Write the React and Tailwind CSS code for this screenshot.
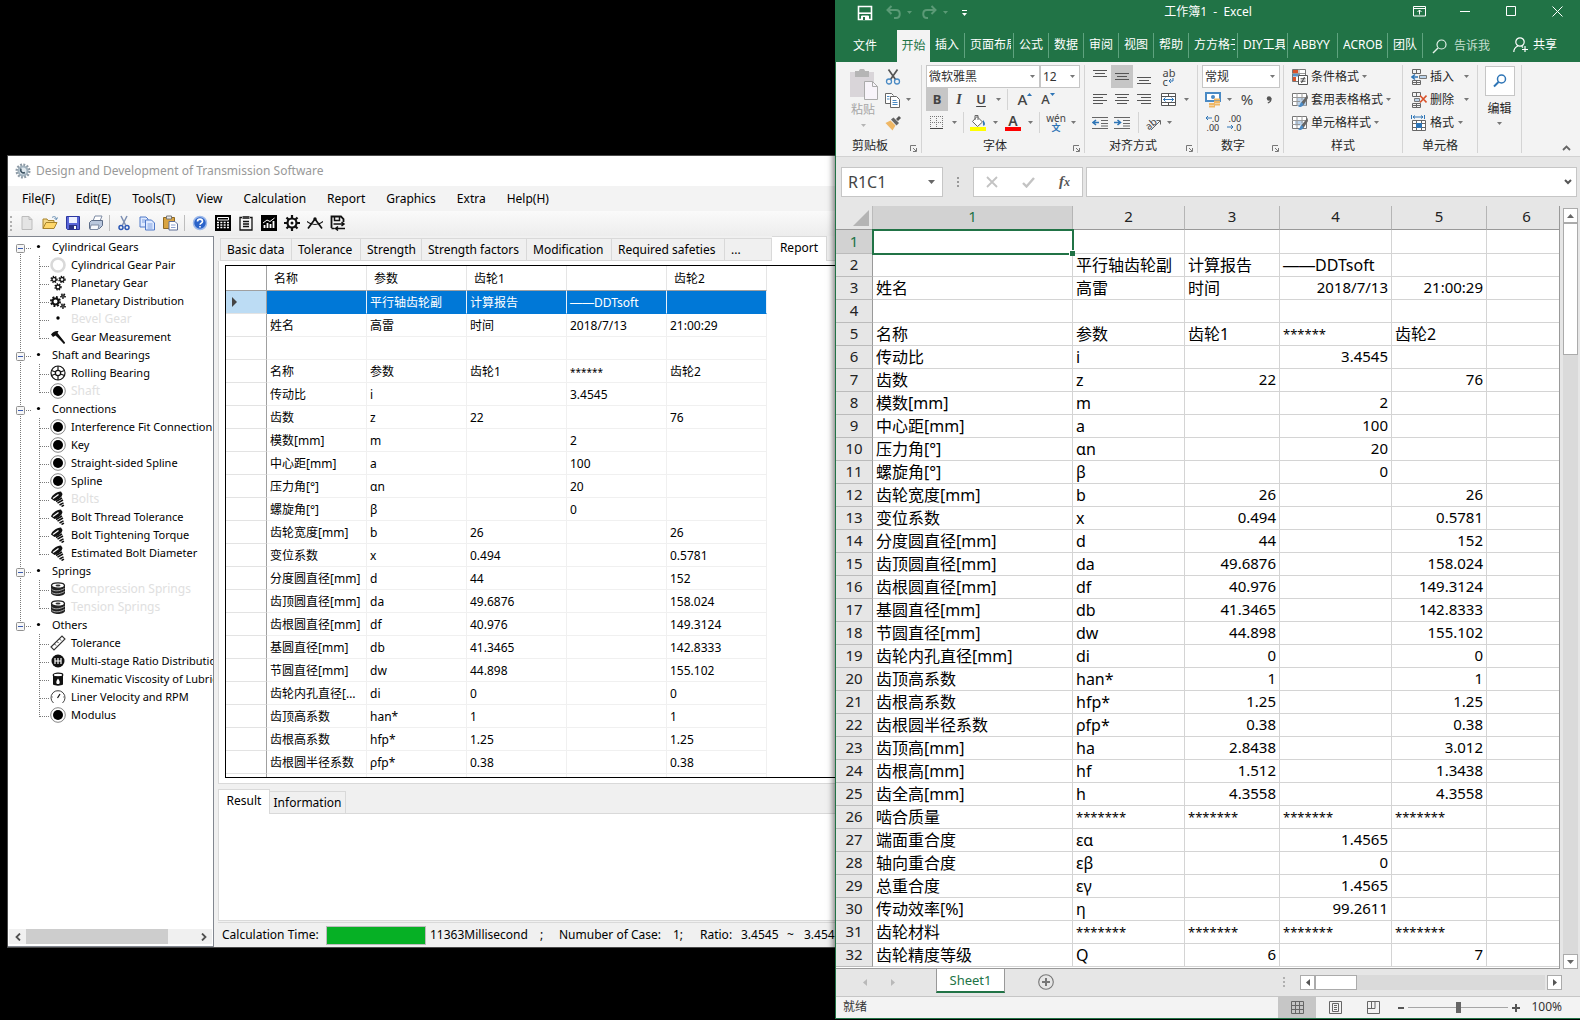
import React from "react";

/* ---------- small shared drawings ---------- */

const Svg = ({ w = 16, h = 16, children, className = "" }) => (
  <svg width={w} height={h} viewBox={`0 0 ${w} ${h}`} fill="none" aria-hidden="true" className={"shrink-0 " + className}>
    {children}
  </svg>
);

const Caret = ({ color = "#777" }) => (
  <Svg w={5} h={3}>
    <path d="M0 0h5L2.500 3z" fill={color} />
  </Svg>
);

/* ---------- left window: toolbar icons ---------- */

const NewIcon = () => (
  <Svg>
    <path d="M3 1.500h7l3 3v10H3z" fill="#e4e4e4" stroke="#bcbcbc" />
    <path d="M10 1.500v3h3" stroke="#bcbcbc" />
  </Svg>
);
const OpenIcon = () => (
  <Svg>
    <path d="M1 13.500V4h4l1 1.500h6V8" fill="#f5d98a" stroke="#a8842c" />
    <path d="M1 13.500L4 7.500h11l-3 6z" fill="#ffd76a" stroke="#a8842c" />
    <path d="M10 2.500c2-1.500 4-1 4.500 1.500M15.500 2.500l-1 2-2-1" stroke="#5f88b0" />
  </Svg>
);
const SaveBlueIcon = () => (
  <Svg>
    <path d="M1.500 1.500h13v13h-12l-1-1z" fill="#5a66d8" stroke="#2c37a0" />
    <path d="M4 2h8v6H4z" fill="#eef1ff" />
    <path d="M4 10h8v4.500H4z" fill="#2b3184" />
    <path d="M9 11h2v3H9z" fill="#fff" />
  </Svg>
);
const PrintIcon = () => (
  <Svg>
    <path d="M5 6l2-5h7l-2 5z" fill="#fff" stroke="#7c8aa3" />
    <path d="M1.500 7.500l2-2h11v5l-3 3h-10z" fill="#b9c7dd" stroke="#5d6d88" />
    <path d="M3 10h8l-1 4.500H2z" fill="#f6f8fc" stroke="#7c8aa3" />
  </Svg>
);
const CutIcon = () => (
  <Svg>
    <path d="M5 1l4.500 9M11 1L6.500 10" stroke="#7d8fb3" strokeWidth="1.500" />
    <circle cx="5" cy="12.500" r="2" stroke="#2b57b5" strokeWidth="1.500" />
    <circle cx="11" cy="12.500" r="2" stroke="#2b57b5" strokeWidth="1.500" />
  </Svg>
);
const CopyIcon = () => (
  <Svg>
    <path d="M1 2h6l2 2v8H1z" fill="#dfeaff" stroke="#4f78c8" />
    <path d="M6.500 5h6l3 3v7h-9z" fill="#dfeaff" stroke="#4f78c8" />
    <path d="M3 5h3M3 7h3M8.500 9h5M8.500 11h5M8.500 13h5" stroke="#7ea0e0" />
  </Svg>
);
const PasteIcon = () => (
  <Svg>
    <path d="M1.500 2.500h11v11h-11z" fill="#d9a441" stroke="#8f6a25" />
    <path d="M4.500 1h5v3h-5z" fill="#e8e8e8" stroke="#777" />
    <path d="M7 6.500h6l2.500 2.500v6H7z" fill="#fff" stroke="#5f6f96" />
    <path d="M9 10h4.500M9 12.500h4.500" stroke="#8ba0d0" />
  </Svg>
);
const HelpIcon = () => (
  <Svg>
    <circle cx="8" cy="8" r="6.500" fill="#2a63c9" stroke="#9db9ea" strokeWidth="1.500" />
    <path d="M5.500 6.500c0-3.200 5-3.200 5 0 0 1.600-2.400 1.700-2.400 3.300M8 11v1.500" stroke="#fff" strokeWidth="1.600" />
  </Svg>
);
const CalcIcon = () => (
  <Svg>
    <path d="M0 0h16v16H0z" fill="#000" />
    <path d="M2.500 2.500h11v2.500h-11z" fill="#000" stroke="#fff" />
    <path d="M2 7.500h12M2 10h12M2 12.500h12" stroke="#fff" strokeWidth="1.500" strokeDasharray="2 1.330" />
  </Svg>
);
const NotesIcon = () => (
  <Svg>
    <path d="M4 2.500H2v12.500h12V2.500h-2" stroke="#111" strokeWidth="1.300" />
    <path d="M4.500 1h7v3h-7z" fill="#444" />
    <path d="M5 6.500h6M5 9h6M5 11.500h6" stroke="#111" strokeWidth="1.300" />
  </Svg>
);
const ChartIcon = () => (
  <Svg>
    <path d="M0 0h16v16H0z" fill="#000" />
    <path d="M3.500 13v-3M6.500 13V8M9.500 13V9M12.500 13V6" stroke="#fff" strokeWidth="1.800" />
    <path d="M2 8l4-3 3 1.500L13.500 3" stroke="#fff" />
  </Svg>
);
const GearIcon = () => (
  <Svg>
    <path d="M8 0v16M0 8h16M2.500 2.500l11 11M13.500 2.500l-11 11" stroke="#111" strokeWidth="2.200" />
    <circle cx="8" cy="8" r="4.500" fill="#fff" stroke="#111" strokeWidth="2.200" />
    <circle cx="8" cy="8" r="1.500" fill="#111" />
  </Svg>
);
const CompassIcon = () => (
  <Svg>
    <path d="M8 4L1 13.500M8 4l7 9.500" stroke="#111" strokeWidth="1.700" />
    <path d="M0 6.500c4 4 12 4 16 0" stroke="#111" strokeWidth="1.200" />
    <circle cx="8" cy="4" r="1.700" fill="#111" />
  </Svg>
);
const SaveBlackIcon = () => (
  <Svg>
    <path d="M1.500 13V1.500h9.500l2.500 2.500v3" stroke="#111" strokeWidth="1.800" />
    <path d="M4.500 2v3.500h5V2" stroke="#111" strokeWidth="1.500" />
    <path d="M1.500 13.500h3M3.500 9h10.500M11.500 7l2.500 2-2.500 2M15 13.500H5.500M8 11.500l-2.500 2 2.500 2" stroke="#111" strokeWidth="1.500" />
  </Svg>
);

/* ---------- left window: tree icons ---------- */

const MiniGear = ({ x, y, r }) => (
  <g stroke="#111">
    <circle cx={x} cy={y} r={r + 1} strokeDasharray="1.300 1.200" strokeWidth="1.400" />
    <circle cx={x} cy={y} r={r} strokeWidth="1.300" />
  </g>
);
const treeIcons = {
  ring: <circle cx="8" cy="8" r="6.500" stroke="#d9d9d9" strokeWidth="2.600" />,
  gears: (
    <>
      <MiniGear x={4} y={4.500} r={2} />
      <MiniGear x={12} y={4.500} r={2} />
      <MiniGear x={8} y={12} r={2} />
    </>
  ),
  gears2: (
    <>
      <circle cx="5.500" cy="8.500" r="4.600" stroke="#111" strokeWidth="1.800" strokeDasharray="1.900 1.700" />
      <circle cx="5.500" cy="8.500" r="3" stroke="#111" strokeWidth="2" />
      <MiniGear x={13} y={3} r={1.200} />
      <MiniGear x={13} y={13} r={1.200} />
    </>
  ),
  dot: <circle cx="8" cy="7" r="1.700" fill="#000" />,
  caliper: (
    <>
      <path d="M1 5.500C3 3 5 1.500 8.500 2L7.500 4l7.500 9.500-1 1L5.500 6.500 3 8z" fill="#111" />
      <path d="M7 6l7.500 8.500" stroke="#111" strokeWidth="1.600" />
    </>
  ),
  bearing: (
    <g stroke="#111" strokeWidth="1.200">
      <circle cx="8" cy="8" r="7" />
      <circle cx="8" cy="8" r="2.600" />
      <path d="M8 1v4M8 11v4M1.500 5.500l4 1.500M10.500 9l4 1.500M1.500 10.500l4-1.500M10.500 7l4-1.500" />
    </g>
  ),
  disc: (
    <>
      <circle cx="8" cy="8" r="7.300" stroke="#777" strokeWidth="0.900" />
      <circle cx="8" cy="8" r="5" fill="#000" />
    </>
  ),
  bolt: (
    <>
      <path d="M1 7.500C2 4 6 1 11 0.500L12.500 3C12 6 9 8.500 4.500 10z" fill="#111" />
      <path d="M3 7.500L8.500 3.500" stroke="#fff" strokeWidth="1.200" />
      <path d="M6 10.500l6-3.500M7.500 12.200l5.500-3.200M9.500 14l4-2.200M11.500 15.500l2.500-1.300" stroke="#111" strokeWidth="1.500" />
    </>
  ),
  spring: (
    <>
      <path d="M1 5v7c1 4 13 4 14 0V4z" fill="#222" />
      <ellipse cx="8" cy="4.500" rx="6.500" ry="2.700" fill="#fff" stroke="#222" strokeWidth="1.300" />
      <ellipse cx="8" cy="4.500" rx="2.500" ry="1" fill="#333" />
      <path d="M1.500 8c2 2.500 8 2.500 13-.5M1.500 11c2 2.500 8 2.500 13-.5" stroke="#ccc" strokeWidth="0.800" />
    </>
  ),
  ruler: (
    <>
      <path d="M1 12L12 1l3 3L4 15z" stroke="#333" strokeWidth="1.100" />
      <path d="M4.500 9l1.500 1.500M7 6.500l1.500 1.500M9.500 4l1.500 1.500" stroke="#333" />
    </>
  ),
  ratio: (
    <>
      <circle cx="8" cy="8" r="6.500" fill="#111" />
      <path d="M5 5v6M8 5v6M11 5v6M5 8h6" stroke="#fff" strokeWidth="1.200" />
    </>
  ),
  oil: (
    <>
      <path d="M3 4h10v9.500c-2 1.500-8 1.500-10 0z" fill="#111" />
      <ellipse cx="8" cy="4" rx="4.800" ry="1.800" fill="#fff" stroke="#111" strokeWidth="1.200" />
      <path d="M8 7.500c2.500 3.500 2 5.500 0 5.500s-2.500-2 0-5.500z" fill="#fff" />
    </>
  ),
  gauge: (
    <>
      <path d="M3.500 14a7 7 0 1 1 9 0" stroke="#444" />
      <path d="M7.500 9l2.500-4" stroke="#111" strokeWidth="1.200" />
      <path d="M8 1v1.500M1.500 8H3M13 8h1.500" stroke="#888" />
    </>
  ),
};

const Minus = () => (
  <>
    <rect x="8.500" y="6.500" width="8" height="8" rx="1" fill="#f6f6f6" stroke="#919191" />
    <path d="M10 10.500h5" stroke="#3a5bb0" />
  </>
);
const dots = { stroke: "#7a7a7a", strokeDasharray: "1 1" };

const TREE = [
  ["Cylindrical Gears", [
    ["ring", "Cylindrical Gear Pair"], ["gears", "Planetary Gear"], ["gears2", "Planetary Distribution"],
    ["dot", "Bevel Gear", true], ["caliper", "Gear Measurement"]]],
  ["Shaft and Bearings", [["bearing", "Rolling Bearing"], ["disc", "Shaft", true]]],
  ["Connections", [
    ["disc", "Interference Fit Connection"], ["disc", "Key"], ["disc", "Straight-sided Spline"], ["disc", "Spline"],
    ["bolt", "Bolts", true], ["bolt", "Bolt Thread Tolerance"], ["bolt", "Bolt Tightening Torque"], ["bolt", "Estimated Bolt Diameter"]]],
  ["Springs", [["spring", "Compression Springs", true], ["spring", "Tension Springs", true]]],
  ["Others", [
    ["ruler", "Tolerance"], ["ratio", "Multi-stage Ratio Distribution"], ["oil", "Kinematic Viscosity of Lubricant"],
    ["gauge", "Liner Velocity and RPM"], ["disc", "Modulus"]]],
];

function Tree() {
  return (
    <ul className="flex-1 pt-px text-[11px] leading-[18px]">
      {TREE.map(([name, items], g) => {
        const last = g === TREE.length - 1;
        return (
          <li key={name}>
            <div className="flex h-[18px] whitespace-nowrap">
              <Svg w={44} h={18}>
                <path d={`M12.500 ${g === 0 ? 10 : 0}V${last ? 10 : 18}M18 10.500h6`} {...dots} />
                <Minus />
                <circle cx="30.500" cy="8.500" r="1.600" fill="#000" />
              </Svg>
              <span>{name}</span>
            </div>
            <ul>
              {items.map(([icon, label, off], i) => (
                <li key={label} className="flex h-[18px] whitespace-nowrap">
                  <Svg w={42} h={18}>
                    {!last && <path d="M12.500 0V18" {...dots} />}
                    <path d={`M31.500 0V${i === items.length - 1 ? 11 : 18}M32 10.500h10`} {...dots} />
                  </Svg>
                  <Svg className="mr-[5px] mt-px">{treeIcons[icon]}</Svg>
                  <span className={off ? "text-[12px] text-[#e0e0e0]" : ""}>{label}</span>
                </li>
              ))}
            </ul>
          </li>
        );
      })}
    </ul>
  );
}

/* ---------- data ---------- */

const REPORT = [
  ["", "平行轴齿轮副", "计算报告", "——DDTsoft", ""],
  ["姓名", "高雷", "时间", "2018/7/13", "21:00:29"],
  ["", "", "", "", ""],
  ["名称", "参数", "齿轮1", "******", "齿轮2"],
  ["传动比", "i", "", "3.4545", ""],
  ["齿数", "z", "22", "", "76"],
  ["模数[mm]", "m", "", "2", ""],
  ["中心距[mm]", "a", "", "100", ""],
  ["压力角[°]", "αn", "", "20", ""],
  ["螺旋角[°]", "β", "", "0", ""],
  ["齿轮宽度[mm]", "b", "26", "", "26"],
  ["变位系数", "x", "0.494", "", "0.5781"],
  ["分度圆直径[mm]", "d", "44", "", "152"],
  ["齿顶圆直径[mm]", "da", "49.6876", "", "158.024"],
  ["齿根圆直径[mm]", "df", "40.976", "", "149.3124"],
  ["基圆直径[mm]", "db", "41.3465", "", "142.8333"],
  ["节圆直径[mm]", "dw", "44.898", "", "155.102"],
  ["齿轮内孔直径[mm]", "di", "0", "", "0"],
  ["齿顶高系数", "han*", "1", "", "1"],
  ["齿根高系数", "hfp*", "1.25", "", "1.25"],
  ["齿根圆半径系数", "ρfp*", "0.38", "", "0.38"],
];
const MORE = [
  ["齿顶高[mm]", "ha", "2.8438", "", "3.012"],
  ["齿根高[mm]", "hf", "1.512", "", "1.3438"],
  ["齿全高[mm]", "h", "4.3558", "", "4.3558"],
  ["啮合质量", "*******", "*******", "*******", "*******"],
  ["端面重合度", "εα", "", "1.4565", ""],
  ["轴向重合度", "εβ", "", "0", ""],
  ["总重合度", "εγ", "", "1.4565", ""],
  ["传动效率[%]", "η", "", "99.2611", ""],
  ["齿轮材料", "*******", "*******", "*******", "*******"],
  ["齿轮精度等级", "Q", "6", "", "7"],
];
const SHEET = [["", "", "", "", ""], ...REPORT, ...MORE];

const isNumber = (c) => /^\d/.test(c);
const isStars = (c) => /^\*+$/.test(c);

/* Liberation Sans draws long dashes edge to edge, so they join into one rule. */
const CellText = ({ value }) =>
  value.startsWith("——") ? (
    <>
      <span className="font-['Liberation_Sans',sans-serif]">——</span>
      {value.slice(2)}
    </>
  ) : (
    value
  );

/* ---------- left window ---------- */

const Tool = ({ label, children }) => (
  <button aria-label={label} className="flex h-[23px] w-[23px] items-center justify-center">{children}</button>
);
const ToolSep = ({ m }) => <span className={`h-[16px] w-px bg-[#bdbdbd] ${m}`} />;

const TABS = [
  ["Basic data", "w-[72px]"], ["Tolerance", "w-[69px]"], ["Strength", "w-[61px]"], ["Strength factors", "w-[105px]"],
  ["Modification", "w-[85px]"], ["Required safeties", "w-[113px]"], ["...", "w-[47px]"],
];

function GearWindow() {
  return (
    <section className="ml-[7px] mt-[155px] flex min-w-0 flex-1 flex-col self-start overflow-hidden border-y border-l border-[#4a4a4a] bg-[#f0f0f0] text-[12px] text-black">
      <header className="flex h-[30px] items-center bg-white pl-[7px] text-[#999]">
        <Svg className="mr-[5px]">
          <circle cx="8" cy="8" r="6" stroke="#8d9aa5" strokeWidth="3" strokeDasharray="1.800 1.300" />
          <circle cx="8" cy="8" r="4.500" fill="#dfe8ee" stroke="#9fb0bc" strokeWidth="2" />
          <path d="M6 5.500C5 8 7 11 10 9.500" stroke="#3f5666" strokeWidth="1.600" />
        </Svg>
        <h1>Design and Development of Transmission Software</h1>
      </header>
      <nav className="flex h-[25px] items-center gap-px bg-[#f3f3f3] pl-[4px]">
        {["File(F)", "Edit(E)", "Tools(T)", "View", "Calculation", "Report", "Graphics", "Extra", "Help(H)"].map((m) => (
          <button key={m} className="px-[10px]">{m}</button>
        ))}
      </nav>
      <div className="flex h-[25px] items-center bg-gradient-to-b from-[#fafafa] to-[#ededed] pb-px">
        <span className="ml-[2px] mr-[3px] h-[15px] border-l-2 border-dotted border-[#b0b0b0]" />
        <Tool label="New"><NewIcon /></Tool>
        <Tool label="Open"><OpenIcon /></Tool>
        <Tool label="Save"><SaveBlueIcon /></Tool>
        <Tool label="Print"><PrintIcon /></Tool>
        <ToolSep m="mx-[2px]" />
        <Tool label="Cut"><CutIcon /></Tool>
        <Tool label="Copy"><CopyIcon /></Tool>
        <Tool label="Paste"><PasteIcon /></Tool>
        <ToolSep m="mx-[3px]" />
        <Tool label="Help"><HelpIcon /></Tool>
        <Tool label="Calculator"><CalcIcon /></Tool>
        <Tool label="Notes"><NotesIcon /></Tool>
        <Tool label="Chart"><ChartIcon /></Tool>
        <Tool label="Settings"><GearIcon /></Tool>
        <Tool label="Compass"><CompassIcon /></Tool>
        <Tool label="Save as"><SaveBlackIcon /></Tool>
      </div>

      <div className="flex">
        <aside className="flex w-[206px] shrink-0 flex-col overflow-hidden border border-l-0 border-[#828790] bg-white">
          <Tree />
          <div className="mx-px mb-[2px] flex h-[15px] items-center bg-[#f0f0f0]">
            <button aria-label="Scroll left" className="flex w-[17px] justify-center">
              <Svg w={6} h={8}><path d="M5 0.500L1.500 4 5 7.500" stroke="#505050" strokeWidth="1.800" /></Svg>
            </button>
            <div className="flex flex-1 self-stretch"><span className="w-[142px] bg-[#cdcdcd]" /></div>
            <button aria-label="Scroll right" className="flex w-[17px] justify-center">
              <Svg w={6} h={8}><path d="M1 0.500L4.500 4 1 7.500" stroke="#505050" strokeWidth="1.800" /></Svg>
            </button>
          </div>
        </aside>

        <div className="flex min-w-0 flex-1 flex-col pl-[4px]">
          <div role="tablist" className="flex h-[25px] items-end pl-[2px]">
            {TABS.map(([t, w], i) => (
              <button key={t} role="tab" className={`${w} h-[23px] whitespace-nowrap border-b border-r border-t border-[#d9d9d9] pl-[6px] text-left leading-[20px] ${i === 0 ? "border-l" : ""}`}>{t}</button>
            ))}
            <button role="tab" aria-selected="true" className="h-[25px] w-[55px] border-r border-t border-[#d9d9d9] bg-white pb-[2px] text-center leading-[20px]">Report</button>
            <span className="flex-1 self-stretch border-b border-[#d9d9d9]" />
          </div>
          <div className="border-b border-l border-[#d9d9d9] bg-white pb-[5px] pl-[6px] pt-[4px]">
            <div className="border border-r-0 border-black">
              <table className="w-[541px] table-fixed border-separate border-spacing-0 text-left leading-[20px]">
                <colgroup>
                  <col className="w-[41px]" />
                  <col className="w-[100px]" /><col className="w-[100px]" /><col className="w-[100px]" /><col className="w-[100px]" /><col className="w-[100px]" />
                </colgroup>
                <thead>
                  <tr className="h-[25px]">
                    {["", "名称", "参数", "齿轮1", "", "齿轮2"].map((c, i) => (
                      <th key={i} className={`border-b border-r border-b-[#a0a0a0] p-0 pl-[7px] pt-[2px] font-normal ${i === 0 ? "border-r-[#a0a0a0]" : "border-r-[#e5e5e5]"}`}>{c}</th>
                    ))}
                  </tr>
                </thead>
                <tbody>
                  {REPORT.map((r, i) => (
                    <tr key={i} className="h-[23px]">
                      <th className={`border-b border-r border-b-[#e3e3e3] border-r-[#a0a0a0] p-0 pl-[6px] ${i === 0 ? "bg-[#bcdcf4]" : ""}`}>
                        {i === 0 && <Svg w={6} h={10}><path d="M0 0l5 5-5 5z" fill="#444" /></Svg>}
                      </th>
                      {r.map((c, j) => (
                        <td key={j} className={`truncate border-b border-r p-0 pl-[3px] pt-px ${isStars(c) ? "text-[10px]" : ""} ${i === 0 ? "border-b-[#0078d7] border-r-[#e8f0f8] bg-[#0078d7] text-white" : "border-[#f0f0f0]"}`}><CellText value={c} /></td>
                      ))}
                    </tr>
                  ))}
                  <tr className="h-[3px]">
                    {[0, 1, 2, 3, 4, 5].map((i) => (
                      <td key={i} className={`border-r p-0 ${i === 0 ? "border-r-[#a0a0a0]" : "border-[#f0f0f0]"}`} />
                    ))}
                  </tr>
                </tbody>
              </table>
            </div>
          </div>
          <div role="tablist" className="mt-[5px] flex h-[25px] items-end">
            <button role="tab" aria-selected="true" className="h-[25px] w-[52px] border-l border-r border-t border-[#d9d9d9] bg-white pb-[2px] leading-[20px]">Result</button>
            <button role="tab" className="h-[23px] w-[76px] border-b border-r border-t border-[#d9d9d9] leading-[20px]">Information</button>
            <span className="flex-1 self-stretch border-b border-[#d9d9d9]" />
          </div>
          <div className="h-[107px] border-b border-l border-[#d9d9d9] bg-white" />
          <footer className="mt-px flex h-[25px] items-center whitespace-nowrap border-t border-[#d9d9d9] pl-[4px]">
            <span className="w-[104px] shrink-0">Calculation Time:</span>
            <span role="progressbar" aria-label="Calculation progress" className="h-[19px] w-[100px] shrink-0 border border-[#bcbcbc] bg-[#06b025]" />
            <span className="w-[114px] shrink-0 pl-[4px]">11363Millisecond</span>
            <span className="w-[19px] shrink-0">;</span>
            <span className="w-[114px] shrink-0">Numuber of Case:</span>
            <span className="w-[27px] shrink-0">1;</span>
            <span className="w-[41px] shrink-0">Ratio:</span>
            <span className="w-[46px] shrink-0">3.4545</span>
            <span className="w-[17px] shrink-0">~</span>
            <span>3.4545</span>
          </footer>
        </div>
      </div>
    </section>
  );
}

/* ---------- spreadsheet: ribbon parts ---------- */

const RBtn = ({ label, w = "w-[22px]", on, children }) => (
  <button aria-label={label} className={`flex h-[23px] shrink-0 items-center justify-center ${w} ${on ? "bg-[#c6c6c6]" : ""}`}>{children}</button>
);
const RSep = ({ m = "mx-[3px]" }) => <span className={`h-[21px] w-px shrink-0 bg-[#d4d4d4] ${m}`} />;
const Launcher = () => (
  <button aria-label="More options" className="absolute bottom-px right-[4px]">
    <Svg w={7} h={7} className="block"><path d="M0.500 6V0.500H6M3 3l3 3M6.500 3v3.500H3" stroke="#777" /></Svg>
  </button>
);
const Group = ({ w, name, launcher, children, label = "text-center" }) => (
  <div className={`relative flex shrink-0 flex-col border-r border-[#d4d4d4] ${w}`}>
    {children}
    {name && <span className={`h-[19px] leading-[24px] ${label}`}>{name}</span>}
    {launcher && <Launcher />}
  </div>
);
const Row = ({ children, className = "" }) => <div className={`flex h-[23px] items-center ${className}`}>{children}</div>;

const Pick = ({ label, value, w }) => (
  <label className={`flex h-[23px] shrink-0 items-center border border-[#c6c6c6] bg-white pr-[4px] ${w}`}>
    <select aria-label={label} defaultValue={value} className="min-w-0 flex-1 appearance-none bg-transparent pl-[2px] text-[12px] leading-[20px] text-[#333] outline-none">
      <option>{value}</option>
    </select>
    <Caret />
  </label>
);

const Lines = ({ rows }) => (
  <Svg w={14} h={14}>
    {rows.map(([x, y, w], i) => <path key={i} d={`M${x} ${y + 0.5}h${w}`} stroke="#555" />)}
  </Svg>
);
const Indent = ({ flip }) => (
  <Svg>
    <path d="M0 2.500h16M9 5.500h7M9 8.500h7M0 13.500h16M9 11h7" stroke="#666" />
    <path d={flip ? "M0 7.500h6M3.500 5l3 2.500-3 2.500" : "M7 7.500H1M4 5L1 7.500 4 10"} stroke="#2e75b6" strokeWidth="1.600" />
  </Svg>
);

const StyleTable = ({ children }) => (
  <Svg>
    <path d="M0.500 1.500h14v12H0.500z" fill="#fff" stroke="#777" />
    {children}
    <path d="M0 5.500h14M5 1v12M10 1v7M0 9.500h8" stroke="#999" />
    <path d="M15.500 3l-6 7-2 5 4-2 4.500-7z" fill="#666" />
    <path d="M9.500 10c-1.500 1-1 3-3.500 4.500 2 1 5 .5 5.500-2.500z" fill="#4a8ac4" />
  </Svg>
);
const CondIcon = () => (
  <Svg>
    <path d="M0.500 0.500h13v12H0.500z" fill="#fff" stroke="#777" />
    <path d="M1 1h5v3H1z" fill="#d9532c" /><path d="M1 4.500h7v3H1z" fill="#5b93c8" /><path d="M1 8h3v4H1z" fill="#d9532c" />
    <path d="M7 0v12M0 4.500h13" stroke="#999" />
    <path d="M6.500 6.500h9v9h-9z" fill="#fff" stroke="#555" />
    <path d="M8.500 9.800h5M8.500 12.200h5M12.500 8L9.500 14" stroke="#444" />
  </Svg>
);
const CellBase = () => (
  <path d="M1.500 0.500h8v4h-8zM5.500 0.500v4M1.500 11.500h8v4h-8zM5.500 11.500v4M1.500 13.500h8" stroke="#666" />
);
const InsertIcon = () => (
  <Svg>
    <CellBase />
    <path d="M8.500 6.500h7v3h-7z" fill="#bcd3ea" stroke="#777" />
    <path d="M7 8H1M4 5.500L1 8l3 2.500" stroke="#2e75b6" strokeWidth="1.500" />
  </Svg>
);
const DeleteIcon = () => (
  <Svg>
    <CellBase />
    <path d="M3.500 6.500h5v3h-5z" fill="#bcd3ea" stroke="#777" />
    <path d="M9 3.500l6.500 7M15.500 3.500L9 10.500" stroke="#d9532c" strokeWidth="1.600" />
  </Svg>
);
const FormatIcon = () => (
  <Svg>
    <path d="M1.500 5.500h13v10h-13zM5.500 5.500v10M10.500 5.500v10M1.500 8.500h13M1.500 12.500h13" stroke="#666" fill="#fff" />
    <path d="M5 8h6v5H5z" fill="#2e75b6" />
    <path d="M0.500 0v4M13.500 0v4M2 2h10M4 0.500L2 2l2 1.500M10 0.500L12 2l-2 1.500" stroke="#2e75b6" />
  </Svg>
);

const TextRow = ({ icon, text, caret = "pl-0" }) => (
  <button className="flex h-[23px] items-center gap-[3px] pl-[8px]">
    {icon}
    <span>{text}</span>
    <span className={caret}><Caret /></span>
  </button>
);

const RIBBON_TABS = [
  ["插入", "w-[35px]"], ["页面布局", "w-[49px]"], ["公式", "w-[35px]"], ["数据", "w-[35px]"], ["审阅", "w-[35px]"],
  ["视图", "w-[35px]"], ["帮助", "w-[35px]"], ["方方格子", "w-[49px]"], ["DIY工具箱", "w-[50px]"],
  ["ABBYY", "w-[50px]"], ["ACROB", "w-[50px]"], ["团队", "w-[35px]"],
];

function TitleBar() {
  return (
    <header className="relative flex h-[30px] items-start justify-between pb-[6px] text-white">
      <div className="flex h-[24px] items-center pl-[21px] pt-px">
        <button aria-label="保存" className="mr-[13px]">
          <Svg><path d="M1.500 1.500h13v13h-13z" stroke="#fff" strokeWidth="1.600" /><path d="M2 8.200h12" stroke="#fff" strokeWidth="1.600" /><path d="M4.500 15v-4h7v4" fill="#fff" stroke="#fff" /><path d="M6 12h2v3H6z" fill="#217346" /></Svg>
        </button>
        <button aria-label="撤消" className="mr-[5px]">
          <Svg><path d="M5.500 1L1.500 5l4 4M2 5h8c5 0 5 8 0 8H8" stroke="#5b9a76" strokeWidth="2" /></Svg>
        </button>
        <Caret color="#5b9a76" />
        <button aria-label="恢复" className="ml-[9px] mr-[6px]">
          <Svg><path d="M10.500 1l4 4-4 4M14 5H6c-5 0-5 8 0 8h1" stroke="#5b9a76" strokeWidth="2" /></Svg>
        </button>
        <Caret color="#5b9a76" />
        <button aria-label="自定义" className="ml-[14px]">
          <Svg w={5} h={6}><path d="M0 0.500h5" stroke="#fff" /><path d="M0 3h5L2.500 6z" fill="#fff" /></Svg>
        </button>
      </div>
      <h1 className="absolute inset-x-0 top-0 whitespace-pre text-center text-[12px] leading-[24px]">{"工作簿1  -  Excel"}</h1>
      <div className="flex h-[22px] items-center">
        <button aria-label="功能区显示选项" className="flex w-[46px] justify-center">
          <Svg w={13} h={11}><path d="M0.500 0.500h12v9.500H0.500zM0.500 2.500h12M6.500 8.500V4M4.500 6l2-2 2 2" stroke="#fff" /></Svg>
        </button>
        <button aria-label="最小化" className="flex w-[46px] justify-center"><Svg w={10} h={10}><path d="M0 5.500h10" stroke="#fff" /></Svg></button>
        <button aria-label="最大化" className="flex w-[46px] justify-center"><Svg w={10} h={10}><path d="M0.500 0.500h9v9h-9z" stroke="#fff" /></Svg></button>
        <button aria-label="关闭" className="flex w-[46px] justify-center"><Svg w={11} h={11}><path d="M0.500 0.500l10 10M10.500 0.500l-10 10" stroke="#fff" /></Svg></button>
      </div>
    </header>
  );
}

function RibbonTabs() {
  return (
    <nav className="flex h-[32px] items-stretch text-[12px] text-white">
      <button className="w-[58px] text-center leading-[28px]">文件</button>
      <button className="ml-[3px] w-[33px] bg-[#f3f3f3] text-center leading-[28px] text-[#217346]">开始</button>
      {RIBBON_TABS.map(([t, w]) => (
        <button key={t} className={`flex items-center pb-[4px] pt-[2px] ${w}`}>
          <span className="ml-[5px] mr-[2px] block min-w-0 flex-1 overflow-hidden whitespace-nowrap text-left leading-[24px]">{t}</span>
          <span className="h-[25px] w-px shrink-0 bg-[#5fa37f]" />
        </button>
      ))}
      <button className="flex items-center gap-[7px] pl-[9px] text-[#c5dfd0]">
        <Svg w={15} h={15}><circle cx="9.500" cy="5.500" r="4.500" stroke="#e5f1ea" strokeWidth="1.200" /><path d="M6 9L1 14" stroke="#e5f1ea" strokeWidth="1.400" /></Svg>
        <span>告诉我</span>
      </button>
      <button className="ml-auto mr-[23px] flex items-center gap-[4px] pb-[2px]">
        <Svg w={16} h={16}><circle cx="7" cy="5" r="4.200" stroke="#fff" strokeWidth="1.200" /><path d="M0.800 15c0-3 2-5 4-6M8.500 9.500c1 .3 1 .5 1.500 1M12 9v6M9 12.500h6" stroke="#fff" strokeWidth="1.200" /></Svg>
        <span>共享</span>
      </button>
    </nav>
  );
}

function Ribbon() {
  return (
    <div className="flex h-[95px] items-stretch border-b border-[#d2d2d2] bg-[#f3f3f3] py-[3px] text-[12px] text-[#262626]">
      <Group w="w-[86px]" name="剪贴板" launcher label="pl-[16px]">
        <div className="flex">
          <button className="ml-[8px] flex w-[38px] flex-col items-center pt-[4px] text-[#a6a6a6]">
            <Svg w={29} h={31}>
              <path d="M1 3h24v25H1z" fill="#d9d5d9" />
              <path d="M6 2h4c0-3 6-3 6 0h4v6H6z" fill="#b5b5b5" />
              <path d="M15.500 12.500h8l5 5v13h-13z" fill="#f8f4fa" stroke="#aaa" />
              <path d="M23.500 12.500v5h5" stroke="#aaa" />
            </Svg>
            <span className="leading-[20px]">粘贴</span>
            <span className="flex h-[10px] items-center"><Caret color="#b5b5b5" /></span>
          </button>
          <div className="flex flex-col pl-px">
            <RBtn label="剪切" w="w-[20px]">
              <Svg><path d="M3.500 0.500l7 10M12.500 0.500l-7 10" stroke="#555" strokeWidth="1.700" /><circle cx="4" cy="12.500" r="2.500" stroke="#4a8ac4" strokeWidth="1.300" /><circle cx="12" cy="12.500" r="2.500" stroke="#4a8ac4" strokeWidth="1.300" /></Svg>
            </RBtn>
            <RBtn label="复制" w="w-[30px]">
              <Svg className="mr-[5px]"><path d="M5 11.500H0.500v-10h6l2 2" stroke="#666" fill="#fff" /><path d="M5.500 4.500h6l3 3v8h-9z" fill="#fff" stroke="#666" /><path d="M2 4.500h2.500M2 7h2.500M7.500 8.500h4M7.500 10.500h5M7.500 12.500h5" stroke="#4a8ac4" /></Svg>
              <Caret />
            </RBtn>
            <RBtn label="格式刷" w="w-[20px]">
              <Svg><path d="M0.500 8l5-2.500 5 5-3 5z" fill="#efb765" /><path d="M6 4.500l2.500-2 5.500 5.500-2.500 2.500z" fill="#666" /><path d="M11 4l3-3 2 2-3 3z" fill="#555" /></Svg>
            </RBtn>
          </div>
        </div>
      </Group>

      <Group w="w-[163px]" name="字体" launcher label="pl-[61px]">
        <Row className="pl-[4px]">
          <Pick label="字体" value="微软雅黑" w="w-[114px]" />
          <Pick label="字号" value="12" w="w-[40px]" />
        </Row>
        <Row className="pl-[4px] text-[#444]">
          <RBtn label="加粗" on><b className="text-[13px]">B</b></RBtn>
          <RBtn label="倾斜"><i className="font-['Liberation_Serif',serif] text-[14px] font-bold">I</i></RBtn>
          <RBtn label="下划线"><span className="text-[13px] font-semibold underline underline-offset-2">U</span></RBtn>
          <RBtn label="下划线选项" w="w-[12px]"><Caret /></RBtn>
          <RSep />
          <RBtn label="增大字号" w="w-[28px]"><span className="text-[15px] font-medium">A</span><Svg w={5} h={14}><path d="M0 3h5L2.500 0z" fill="#2e75b6" /></Svg></RBtn>
          <RBtn label="减小字号" w="w-[18px]"><span className="text-[13px] font-medium">A</span><Svg w={5} h={14}><path d="M0 0h5L2.500 3z" fill="#2e75b6" /></Svg></RBtn>
        </Row>
        <Row className="pl-[4px] text-[#444]">
          <RBtn label="边框"><Svg w={14} h={14}><path d="M0.500 0v12M6.500 0v12M12.500 0v12M0 0.500h13M0 6.500h13" stroke="#777" strokeDasharray="1 1" /><path d="M0 12.500h13" stroke="#444" /></Svg></RBtn>
          <RBtn label="边框选项" w="w-[12px]"><Caret /></RBtn>
          <RSep />
          <RBtn label="填充颜色"><Svg><path d="M7 1.500l5.500 5.500-5 4.500-5-5z" fill="#fff" stroke="#666" /><path d="M5 5V0.500h3V5" stroke="#666" /><path d="M13 5c2 2 3 5 .5 6-1-2-.5-4-.5-6z" fill="#2e75b6" /><path d="M0 12h16v4H0z" fill="#ff0" /></Svg></RBtn>
          <RBtn label="填充选项" w="w-[12px]"><Caret /></RBtn>
          <RBtn label="字体颜色" w="w-[24px]">
            <span className="flex flex-col items-center"><span className="text-[14px] font-semibold leading-[12px]">A</span><span className="h-[4px] w-[16px] bg-[#f00]" /></span>
          </RBtn>
          <RBtn label="字体颜色选项" w="w-[10px]"><Caret /></RBtn>
          <RSep m="mx-[4px]" />
          <RBtn label="拼音指南" w="w-[24px]"><span className="flex flex-col items-center text-[10px] leading-[10px]"><span>wén</span><span className="text-[9px] font-bold leading-[10px] text-[#2e75b6]">文</span></span></RBtn>
          <RBtn label="拼音选项" w="w-[10px]"><Caret /></RBtn>
        </Row>
      </Group>

      <Group w="w-[113px]" name="对齐方式" launcher label="pl-[24px]">
        <Row className="pl-[4px]">
          <RBtn label="顶端对齐"><Lines rows={[[0, 0, 14], [2, 3, 10], [0, 6, 14]]} /></RBtn>
          <RBtn label="垂直居中" on><Lines rows={[[0, 3, 14], [2, 6, 10], [0, 9, 14]]} /></RBtn>
          <RBtn label="底端对齐"><Lines rows={[[0, 7, 14], [2, 10, 10], [0, 13, 14]]} /></RBtn>
          <RBtn label="自动换行" w="w-[28px]">
            <span className="flex flex-col text-left text-[11px] leading-[9px] text-[#444]"><span>ab</span><span className="flex items-center">c<Svg w={6} h={6}><path d="M5 0v3H1M3 1L1 3l2 2" stroke="#2e75b6" /></Svg></span></span>
          </RBtn>
        </Row>
        <Row className="pl-[4px]">
          <RBtn label="左对齐"><Lines rows={[[0, 1, 14], [0, 4, 10], [0, 7, 14], [0, 10, 10]]} /></RBtn>
          <RBtn label="居中"><Lines rows={[[0, 1, 14], [2, 4, 10], [0, 7, 14], [2, 10, 10]]} /></RBtn>
          <RBtn label="右对齐"><Lines rows={[[0, 1, 14], [4, 4, 10], [0, 7, 14], [4, 10, 10]]} /></RBtn>
          <RBtn label="合并后居中" w="w-[28px]"><Svg><path d="M0.500 1.500h14v12H0.500zM0 4.500h15M0 10.500h15M7.500 1v3M7.500 11v3" fill="#fff" stroke="#555" /><path d="M2 7.500h11M4.500 5.500l-2 2 2 2M10.500 5.500l2 2-2 2" stroke="#2e75b6" /></Svg></RBtn>
          <RBtn label="合并选项" w="w-[6px]"><Caret /></RBtn>
        </Row>
        <Row className="pl-[4px]">
          <RBtn label="减少缩进"><Indent /></RBtn>
          <RBtn label="增加缩进"><Indent flip /></RBtn>
          <RSep m="ml-[5px] mr-[4px]" />
          <RBtn label="方向"><Svg w={18} h={16}><text x="1" y="12" fontSize="10" fill="#444" transform="rotate(-40 7 10)">ab</text><path d="M6 15l9-9M11.500 5.500H15.500V9.500" stroke="#666" /></Svg></RBtn>
          <RBtn label="方向选项" w="w-[8px]"><Caret /></RBtn>
        </Row>
      </Group>

      <Group w="w-[86px]" name="数字" launcher label="pl-[23px]">
        <Row className="pl-[4px]"><Pick label="数字格式" value="常规" w="w-[78px]" /></Row>
        <Row className="pl-[6px] text-[#444]">
          <RBtn label="会计数字格式" w="w-[18px]"><Svg><path d="M1 1h14v8H1z" fill="#fff" stroke="#4a8ac4" strokeWidth="2" /><circle cx="8" cy="5" r="2" fill="#4a8ac4" /><path d="M9 7.500h6M9 10h6M9 12.500h6M4 12h6M4 14.500h6" stroke="#efb765" strokeWidth="1.800" /></Svg></RBtn>
          <RBtn label="会计选项" w="w-[14px]"><Caret /></RBtn>
          <RBtn label="百分比样式"><span className="text-[15px]">%</span></RBtn>
          <RBtn label="千位分隔样式"><Svg w={6} h={8}><circle cx="3" cy="2.500" r="2.200" fill="#555" /><path d="M4.800 2c.6 2.500-.8 4.200-3 5" stroke="#555" strokeWidth="1.300" /></Svg></RBtn>
        </Row>
        <Row className="pl-[3px] text-[9px] leading-[9px] text-[#333]">
          <RBtn label="增加小数位数"><span className="flex flex-col text-right"><span className="flex items-center"><Svg w={7} h={6}><path d="M7 3H1M3 1L1 3l2 2" stroke="#2e75b6" /></Svg>.0</span><span>.00</span></span></RBtn>
          <RBtn label="减少小数位数"><span className="flex flex-col text-right"><span>.00</span><span className="flex items-center"><Svg w={7} h={6}><path d="M0 3h6M4 1l2 2-2 2" stroke="#2e75b6" /></Svg>.0</span></span></RBtn>
        </Row>
      </Group>

      <Group w="w-[119px]" name="样式">
        <TextRow icon={<CondIcon />} text="条件格式" />
        <TextRow icon={<StyleTable><path d="M5 5.500h9v8H5z" fill="#bcd3ea" /></StyleTable>} text="套用表格格式" />
        <TextRow icon={<StyleTable><path d="M3 5.500h8v5H3z" fill="#bcd3ea" /></StyleTable>} text="单元格样式" />
      </Group>

      <Group w="w-[75px]" name="单元格">
        <TextRow icon={<InsertIcon />} text="插入" caret="pl-[7px]" />
        <TextRow icon={<DeleteIcon />} text="删除" caret="pl-[7px]" />
        <TextRow icon={<FormatIcon />} text="格式" caret="pl-px" />
      </Group>

      <Group w="w-[44px]">
        <button className="flex flex-col items-center pt-px">
          <span className="flex h-[30px] w-[30px] items-center justify-center border border-[#c6c6c6] bg-white">
            <Svg w={14} h={14}><circle cx="8.500" cy="5" r="4" stroke="#2e75b6" strokeWidth="1.500" /><path d="M5.500 8L1 12.500" stroke="#2e75b6" strokeWidth="2" /></Svg>
          </span>
          <span className="leading-[26px]">编辑</span>
          <Caret />
        </button>
      </Group>
      <button aria-label="折叠功能区" className="ml-auto mr-[9px] self-end pb-[2px]">
        <Svg w={9} h={6}><path d="M1 5l3.500-3.500L8 5" stroke="#666" strokeWidth="1.800" /></Svg>
      </button>
    </div>
  );
}

function FormulaBar() {
  return (
    <div className="flex h-[49px] items-start bg-[#e6e6e6] pl-[5px] pr-[3px] pt-[10px]">
      <label className="flex h-[30px] w-[102px] items-center border border-[#c6c6c6] bg-white pr-[7px]">
        <input aria-label="名称框" defaultValue="R1C1" className="min-w-0 flex-1 bg-transparent pl-[6px] text-[16px] text-[#444] outline-none" />
        <Svg w={7} h={4}><path d="M0 0h7L3.500 4z" fill="#666" /></Svg>
      </label>
      <span className="mx-[14px] mt-[10px] h-[10px] w-[2px] border-l-2 border-dotted border-[#999]" />
      <div className="flex h-[30px] w-[110px] items-center justify-around border border-[#c6c6c6] bg-white">
        <button aria-label="取消"><Svg w={12} h={12}><path d="M1 1l10 10M11 1L1 11" stroke="#c3c3c3" strokeWidth="1.800" /></Svg></button>
        <button aria-label="输入"><Svg w={13} h={12}><path d="M1 7l3.500 3.500L12 2" stroke="#c3c3c3" strokeWidth="2.400" /></Svg></button>
        <button aria-label="插入函数" className="pb-[2px] font-['Liberation_Serif',serif] text-[15px] font-bold italic leading-[20px] text-[#555]">f<span className="text-[12px]">x</span></button>
      </div>
      <label className="ml-[3px] flex h-[30px] min-w-0 flex-1 items-center border border-[#c6c6c6] bg-white pr-[4px]">
        <input aria-label="编辑栏" className="min-w-0 flex-1 bg-transparent px-1 outline-none" />
        <Svg w={8} h={6}><path d="M1 1l3 3 3-3" stroke="#555" strokeWidth="2" /></Svg>
      </label>
    </div>
  );
}

function Sheet() {
  return (
    <div className="flex bg-[#e6e6e6]">
      <div className="min-w-0 flex-1 border-b border-r border-[#999] bg-white pb-px">
        <table className="w-full table-fixed border-separate border-spacing-0 text-[16px] leading-[20px] text-black">
          <colgroup>
            <col className="w-[37px]" /><col className="w-[200px]" /><col className="w-[112px]" /><col className="w-[95px]" />
            <col className="w-[112px]" /><col className="w-[95px]" /><col />
          </colgroup>
          <thead>
            <tr className="h-[24px] bg-[#e6e6e6] text-[15px]">
              <th className="border-b border-r border-b-[#999] border-r-[#bbb] p-0">
                <Svg w={16} h={16} className="ml-auto mr-[3px]"><path d="M16 0v16H0z" fill="#b4b4b4" /></Svg>
              </th>
              {["1", "2", "3", "4", "5", "6"].map((n, i) => (
                <th key={n} className={`border-b border-b-[#999] p-0 pb-[3px] font-normal ${i < 5 ? "border-r border-r-[#b5b5b5]" : "pl-[7px]"} ${i === 0 ? "bg-[#d2d2d2] text-[#217346]" : "text-[#222]"}`}>{n}</th>
              ))}
            </tr>
          </thead>
          <tbody>
            {SHEET.map((r, i) => (
              <tr key={i} className={i === 0 ? "h-[24px]" : "h-[23px]"}>
                <th className={`border-b border-r border-b-[#bbb] border-r-[#999] p-0 pb-[2px] text-[15px] font-normal ${i === 0 ? "bg-[#d2d2d2] text-[#217346]" : "bg-[#e6e6e6] text-[#222]"}`}>{i + 1}</th>
                {r.map((c, j) => (
                  <td key={j} className={`relative whitespace-nowrap border-b border-r border-[#d4d4d4] px-[3px] py-0 ${isNumber(c) ? "pb-[2px] text-right text-[15px]" : "text-left"} ${isStars(c) ? "text-[13px]" : ""}`}>
                    <CellText value={c} />
                    {i === 0 && j === 0 && (
                      <span className="absolute -bottom-[2px] -left-[1px] -right-[2px] -top-[1px] z-10 border-2 border-[#217346]">
                        <span className="absolute -bottom-[3px] -right-[3px] h-[6px] w-[6px] border-l border-t border-white bg-[#217346]" />
                      </span>
                    )}
                  </td>
                ))}
                <td className="border-b border-[#d4d4d4] p-0" />
              </tr>
            ))}
          </tbody>
        </table>
      </div>
      <div className="ml-[3px] mr-[2px] mt-[2px] flex w-[15px] flex-col bg-[#dadada]">
        <button aria-label="向上滚动" className="flex h-[15px] items-center justify-center border border-[#ababab] bg-white"><Svg w={7} h={4}><path d="M0 4h7L3.500 0z" fill="#666" /></Svg></button>
        <span className="h-[132px] border border-[#ababab] bg-white" />
        <button aria-label="向下滚动" className="mt-auto flex h-[15px] items-center justify-center border border-[#ababab] bg-white"><Svg w={7} h={4}><path d="M0 0h7L3.500 4z" fill="#666" /></Svg></button>
      </div>
    </div>
  );
}

function SheetBar() {
  return (
    <div className="flex h-[28px] items-start border-b border-[#c6c6c6] bg-[#e6e6e6] pr-[18px]">
      <div className="flex h-[26px] w-[100px] items-center gap-[24px] pl-[27px]">
        <button aria-label="上一个工作表"><Svg w={4} h={7}><path d="M4 0v7L0 3.500z" fill="#b9b9b9" /></Svg></button>
        <button aria-label="下一个工作表"><Svg w={4} h={7}><path d="M0 0v7l4-3.500z" fill="#b9b9b9" /></Svg></button>
      </div>
      <button className="h-[24px] w-[69px] border-x border-b-2 border-x-[#999] border-b-[#217346] bg-white text-[13px] leading-[22px] text-[#217346]">Sheet1</button>
      <button aria-label="新工作表" className="ml-[33px] mt-[5px]">
        <Svg w={16} h={16}><circle cx="8" cy="8" r="7.300" stroke="#777" strokeWidth="1.100" /><path d="M8 4v8M4 8h8" stroke="#777" strokeWidth="2" /></Svg>
      </button>
      <span className="ml-auto mr-[15px] mt-[8px] h-[10px] border-l-2 border-dotted border-[#b0b0b0]" />
      <div className="mt-[6px] flex h-[15px] w-[262px]">
        <button aria-label="向左滚动" className="flex w-[15px] items-center justify-center border border-[#ababab] bg-white"><Svg w={4} h={7}><path d="M4 0v7L0 3.500z" fill="#555" /></Svg></button>
        <span className="w-[42px] border border-[#ababab] bg-white" />
        <span className="mr-[2px] flex-1 bg-[#dadada]" />
        <button aria-label="向右滚动" className="flex w-[15px] items-center justify-center border border-[#ababab] bg-white"><Svg w={4} h={7}><path d="M0 0v7l4-3.500z" fill="#555" /></Svg></button>
      </div>
    </div>
  );
}

function StatusBar() {
  const view = "flex w-[38px] items-center justify-center self-stretch";
  return (
    <footer className="flex h-[21px] items-center bg-[#f3f3f3] pl-[7px] pr-[18px] text-[12px] text-[#333]">
      <span className="mr-auto pb-[2px]">就绪</span>
      <button aria-label="普通" className={`${view} bg-[#c6c6c6]`}><Svg w={13} h={13}><path d="M0.500 0.500h12v12h-12zM4.500 0v12M8.500 0v12M0 4.500h12M0 8.500h12" stroke="#666" /></Svg></button>
      <button aria-label="页面布局" className={view}><Svg w={13} h={13}><path d="M0.500 0.500h12v12h-12zM3.500 2.500h6v8h-6zM5 4.500h3M5 6.500h3M5 8.500h3" stroke="#666" /></Svg></button>
      <button aria-label="分页预览" className={view}><Svg w={13} h={13}><path d="M0.500 0.500h12v12h-12zM0 7.500h8v-7M4.500 0v7" stroke="#666" /></Svg></button>
      <button aria-label="缩小" className="ml-[6px] mr-[4px]"><Svg w={6} h={6}><path d="M0 3h6" stroke="#555" strokeWidth="2" /></Svg></button>
      <input
        type="range"
        aria-label="显示比例"
        defaultValue="50"
        className="h-[11px] w-[100px] appearance-none bg-[linear-gradient(#a6a6a6,#a6a6a6)] bg-[length:100%_1px] bg-center bg-no-repeat [&::-webkit-slider-thumb]:h-[11px] [&::-webkit-slider-thumb]:w-[5px] [&::-webkit-slider-thumb]:appearance-none [&::-webkit-slider-thumb]:bg-[#666]"
      />
      <button aria-label="放大" className="ml-[4px] mr-[11px]"><Svg w={8} h={8}><path d="M0 4h8M4 0v8" stroke="#555" strokeWidth="2" /></Svg></button>
      <span className="pb-[2px]">100%</span>
    </footer>
  );
}

export default function App() {
  return (
    <main className="flex min-h-screen items-start bg-black font-['Noto_Sans','Noto_Sans_CJK_SC',sans-serif]">
      <GearWindow />
      <section className="relative z-10 w-[745px] shrink-0 border-b border-l border-[#217346] bg-[#217346] shadow-[-2px_0_6px_rgba(0,0,0,0.5)]">
        <TitleBar />
        <RibbonTabs />
        <Ribbon />
        <FormulaBar />
        <Sheet />
        <SheetBar />
        <StatusBar />
      </section>
    </main>
  );
}
